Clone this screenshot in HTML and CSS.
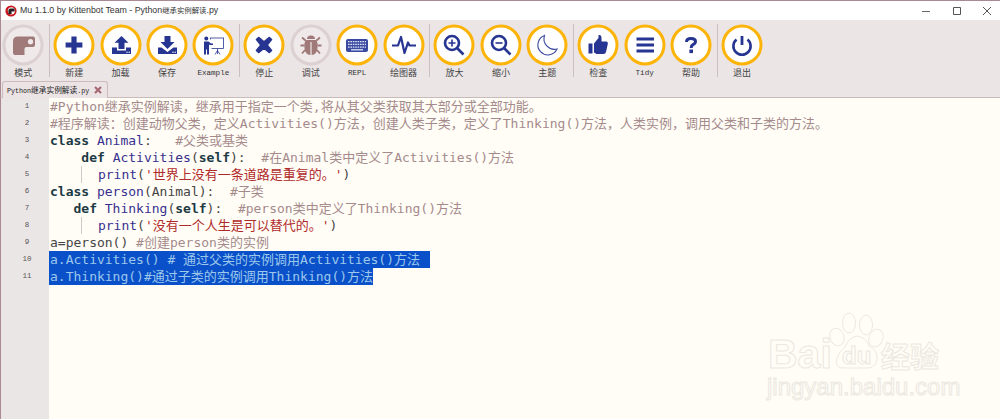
FILE: index.html
```html
<!DOCTYPE html>
<html lang="zh-CN">
<head>
<meta charset="utf-8">
<title>Mu 1.1.0 by Kittenbot Team - Python继承实例解读.py</title>
<link rel="stylesheet" href="styles.css">
</head>
<body>
<div class="window">
  <header class="titlebar">
    <svg class="app-icon" viewBox="0 0 12 12" width="12" height="12"><circle cx="6" cy="6" r="5.6" fill="#c8161d"/><circle cx="6.4" cy="5.8" r="3.6" fill="#fff"/><path d="M3.4 9V5.6Q3.4 3.6 5.4 3.6H9.6V6.6H6.6V9Z" fill="#2a2024"/></svg>
    <span class="app-title">Mu 1.1.0 by Kittenbot Team - Python<span class="title-cjk">继承实例解读</span>.py</span>
    <div class="win-controls">
      <svg viewBox="0 0 10 10" width="10" height="10"><path d="M0 5.5H8" stroke="#666" fill="none"/></svg>
      <svg viewBox="0 0 10 10" width="10" height="10"><path d="M1.5 1.5H8.5V8.5H1.5Z" stroke="#555" fill="none"/></svg>
      <svg viewBox="0 0 10 10" width="10" height="10"><path d="M1 1L9 9M9 1L1 9" stroke="#555" fill="none"/></svg>
    </div>
  </header>

  <nav class="toolbar">
    <div class="tool tool-first">
      <svg class="icon" viewBox="0 0 42 42"><circle class="ring-off" cx="21" cy="21" r="19"/><path class="mauve" d="M11 29V17.5Q11 12.5 16 12.5H31Q33 12.5 33 14.5V21Q33 23 31 23H24.5Q22.5 23 22.5 25V31H13Q11 31 11 29Z"/><circle cx="28.5" cy="17.7" r="2.6" fill="#efe9ea"/></svg>
      <span class="label">模式</span>
    </div>
    <div class="sep"></div>
    <div class="tool">
      <svg class="icon" viewBox="0 0 42 42"><circle class="ring" cx="21" cy="21" r="19"/><path class="navy" d="M18.4 12.6H23.6V18.4H29.4V23.6H23.6V29.4H18.4V23.6H12.6V18.4H18.4Z"/></svg>
      <span class="label">新建</span>
    </div>
    <div class="tool">
      <svg class="icon" viewBox="0 0 42 42"><circle class="ring" cx="21" cy="21" r="19"/><path class="navy" d="M21.5 12L28.5 18.8H24.5V25H18.5V18.8H14.5ZM12 23.5H17V26.5H26V23.5H31V30H12Z"/><circle cx="27" cy="28.2" r="0.7" fill="#fff"/><circle cx="29.2" cy="28.2" r="0.7" fill="#fff"/></svg>
      <span class="label">加载</span>
    </div>
    <div class="tool">
      <svg class="icon" viewBox="0 0 42 42"><circle class="ring" cx="21" cy="21" r="19"/><path class="navy" d="M18.5 12H24.5V18H28.5L21.5 25L14.5 18H18.5ZM12 23.5H15.5L21.5 28L27.5 23.5H31V30H12Z"/><circle cx="27" cy="28.2" r="0.7" fill="#fff"/><circle cx="29.2" cy="28.2" r="0.7" fill="#fff"/></svg>
      <span class="label">保存</span>
    </div>
    <div class="tool">
      <svg class="icon" viewBox="0 0 42 42"><circle class="ring" cx="21" cy="21" r="19"/><circle class="navy" cx="14.3" cy="14.5" r="2"/><path class="navy" d="M12 17.5H16.5L19 19.5H21V21H18L17 20.5V30.5H15V25.5H14V30.5H12Z"/><path d="M18 14H32M18.5 14V15.5M31.5 14V24.5H19.5M25.5 24.5V30M25.5 26.5L23 30.5M25.5 26.5L28 30.5" stroke="#263591" stroke-width="0.8" fill="none"/></svg>
      <span class="label mono">Example</span>
    </div>
    <div class="sep"></div>
    <div class="tool">
      <svg class="icon" viewBox="0 0 42 42"><circle class="ring" cx="21" cy="21" r="19"/><path class="navy" d="M15.6 13.4L21 17.8L26.4 13.4L28.6 15.6L24.2 21L28.6 26.4L26.4 28.6L21 24.2L15.6 28.6L13.4 26.4L17.8 21L13.4 15.6Z" stroke="#263591" stroke-width="1.4" stroke-linejoin="round"/></svg>
      <span class="label">停止</span>
    </div>
    <div class="tool">
      <svg class="icon" viewBox="0 0 42 42"><circle class="ring-off" cx="21" cy="21" r="19"/><path class="mauve" d="M17 15Q17 11.5 21 11.5Q25 11.5 25 15ZM15.5 16H26.5Q28 19 27.5 24Q27 30.5 21.6 31V18H20.4V31Q15 30.5 14.5 24Q14 19 15.5 16Z"/><path d="M15.5 16.5L12 13.5M26.5 16.5L30 13.5M14.5 21.5H10.5M27.5 21.5H31.5M15 26L12 29.5M27 26L30 29.5" stroke="#a07a78" stroke-width="1.8" fill="none"/></svg>
      <span class="label">调试</span>
    </div>
    <div class="tool">
      <svg class="icon" viewBox="0 0 42 42"><circle class="ring" cx="21" cy="21" r="19"/><rect x="10" y="15" width="22" height="13" rx="2" fill="#3a4aa0"/><path d="M12 17.7H30M12 20.4H30M12 23.1H30" stroke="#dfe3f5" stroke-width="1.3" stroke-dasharray="1.6 .8" fill="none"/><path d="M15 25.8H27" stroke="#dfe3f5" stroke-width="1.3"/></svg>
      <span class="label mono">REPL</span>
    </div>
    <div class="tool">
      <svg class="icon" viewBox="0 0 42 42"><circle class="ring" cx="21" cy="21" r="19"/><path d="M9 21.5H15L18 13L21.5 29L25 18.5L26.5 21.5H33" stroke="#263591" stroke-width="2.2" fill="none" stroke-linejoin="round"/></svg>
      <span class="label">绘图器</span>
    </div>
    <div class="sep"></div>
    <div class="tool">
      <svg class="icon" viewBox="0 0 42 42"><circle class="ring" cx="21" cy="21" r="19"/><circle cx="19" cy="19" r="7" fill="none" stroke="#263591" stroke-width="2.6"/><path d="M24 24L30.5 30.5" stroke="#263591" stroke-width="2.6"/><path d="M19 15.5V22.5M15.5 19H22.5" stroke="#263591" stroke-width="1.6"/></svg>
      <span class="label">放大</span>
    </div>
    <div class="tool">
      <svg class="icon" viewBox="0 0 42 42"><circle class="ring" cx="21" cy="21" r="19"/><circle cx="19" cy="19" r="7" fill="none" stroke="#263591" stroke-width="2.6"/><path d="M24 24L30.5 30.5" stroke="#263591" stroke-width="2.6"/><path d="M15.5 19H22.5" stroke="#263591" stroke-width="1.6"/></svg>
      <span class="label">缩小</span>
    </div>
    <div class="tool">
      <svg class="icon" viewBox="0 0 42 42"><circle class="ring" cx="21" cy="21" r="19"/><path d="M18.5 11.5A10 10 0 1 0 31 25A10.5 10.5 0 0 1 18.5 11.5Z" fill="none" stroke="#3a4aa0" stroke-width="1.1"/></svg>
      <span class="label">主题</span>
    </div>
    <div class="sep"></div>
    <div class="tool">
      <svg class="icon" viewBox="0 0 42 42"><circle class="ring" cx="21" cy="21" r="19"/><path class="navy" d="M11.5 19.5H15.5V29.5H11.5ZM17 19.5L21.5 14V11Q24.5 10.5 24.5 14V17.5H29.5Q31.3 17.5 30.8 20L29 28Q28.5 30 26.5 30H19.5L17 28.5Z"/></svg>
      <span class="label">检查</span>
    </div>
    <div class="tool">
      <svg class="icon" viewBox="0 0 42 42"><circle class="ring" cx="21" cy="21" r="19"/><path class="navy" d="M12.5 13.5H30V16.5H12.5ZM12.5 19.5H30V22.5H12.5ZM12.5 25.5H30V28.5H12.5Z"/></svg>
      <span class="label mono">Tidy</span>
    </div>
    <div class="tool">
      <svg class="icon" viewBox="0 0 42 42"><circle class="ring" cx="21" cy="21" r="19"/><path d="M16.5 18Q16.5 14.5 21 14.5Q25.5 14.5 25.5 17.6Q25.5 19.5 23 20.7Q21.2 21.6 21.2 24" fill="none" stroke="#263591" stroke-width="3"/><rect class="navy" x="19.4" y="25.5" width="3.6" height="3.6"/></svg>
      <span class="label">帮助</span>
    </div>
    <div class="sep"></div>
    <div class="tool">
      <svg class="icon" viewBox="0 0 42 42"><circle class="ring" cx="21" cy="21" r="19"/><path d="M21 12V21" stroke="#263591" stroke-width="2.8"/><path d="M15.5 15.5A8.6 8.6 0 1 0 26.5 15.5" fill="none" stroke="#263591" stroke-width="2.6"/></svg>
      <span class="label">退出</span>
    </div>
  </nav>

  <div class="tabbar">
    <div class="tab">
      <span class="tab-name">Python<span class="tab-cjk">继承实例解读</span>.py</span>
      <svg class="tab-close" viewBox="0 0 8 8" width="8" height="8"><path d="M1 1L7 7M7 1L1 7" stroke="#a5666f" stroke-width="2"/></svg>
    </div>
  </div>

  <main class="editor">
    <div class="gutter">
      <div class="num">1</div><div class="num">2</div><div class="num">3</div><div class="num">4</div><div class="num">5</div><div class="num">6</div><div class="num">7</div><div class="num">8</div><div class="num">9</div><div class="num">10</div><div class="num">11</div>
    </div>
    <div class="code">
      <div class="line cm">#Python<span class="c">继承实例解读，继承用于指定一个类</span>,<span class="c">将从其父类获取其大部分或全部功能。</span></div>
      <div class="line cm">#<span class="c">程序解读：创建动物父类，定义</span>Activities()<span class="c">方法，创建人类子类，定义了</span>Thinking()<span class="c">方法，人类实例，调用父类和子类的方法。</span></div>
      <div class="line"><b class="kw">class</b> <span class="nm">Animal</span>:   <span class="cm">#<span class="c">父类或基类</span></span></div>
      <div class="line">    <b class="kw">def</b> <span class="nm">Activities</span>(<b class="kw">self</b>):  <span class="cm">#<span class="c">在</span>Animal<span class="c">类中定义了</span>Activities()<span class="c">方法</span></span></div>
      <div class="line">    <span class="guide"></span>  <span class="nm">print</span>(<span class="st">'<span class="c">世界上没有一条道路是重复的。</span>'</span>)</div>
      <div class="line"><b class="kw">class</b> <span class="nm">person</span>(Animal):  <span class="cm">#<span class="c">子类</span></span></div>
      <div class="line">   <b class="kw">def</b> <span class="nm">Thinking</span>(<b class="kw">self</b>):  <span class="cm">#person<span class="c">类中定义了</span>Thinking()<span class="c">方法</span></span></div>
      <div class="line">    <span class="guide"></span>  <span class="nm">print</span>(<span class="st">'<span class="c">没有一个人生是可以替代的。</span>'</span>)</div>
      <div class="line">a=person() <span class="cm">#<span class="c">创建</span>person<span class="c">类的实例</span></span></div>
      <div class="line"><span class="sel sel-long">a.Activities() # <span class="c">通过父类的实例调用</span>Activities()<span class="c">方法</span></span></div>
      <div class="line"><span class="sel">a.Thinking()#<span class="c">通过子类的实例调用</span>Thinking()<span class="c">方法</span></span></div>
    </div>
    <svg class="watermark" viewBox="0 0 200 100" width="200" height="100">
      <g class="wm-shape">
        <ellipse cx="76" cy="27" rx="7" ry="9" transform="rotate(-20 76 27)"/>
        <ellipse cx="88" cy="13" rx="6.5" ry="10"/>
        <ellipse cx="105" cy="15" rx="6.5" ry="10"/>
        <ellipse cx="115" cy="28" rx="7" ry="9" transform="rotate(20 115 28)"/>
        <path d="M96 26Q106 28 108 36Q117 40 116 50Q114 59 104 58H84Q73 59 76 48Q78 42 84 37Q87 28 96 26Z"/>
      </g>
      <text class="wm-big" x="7" y="58">Bai</text>
      <text class="wm-du" x="81" y="54">du</text>
      <text class="wm-cjk" x="120" y="58">经验</text>
      <text class="wm-url" x="6" y="85">jingyan.baidu.com</text>
    </svg>
  </main>
</div>
</body>
</html>
```

FILE: styles.css
```css
* { box-sizing: border-box; }
html, body { margin: 0; padding: 0; }
body { width: 1000px; height: 419px; overflow: hidden; background: #fffdf6; }
.window { width: 1000px; height: 419px; display: flex; flex-direction: column; position: relative; overflow: hidden; }

.titlebar { height: 20px; flex: none; display: flex; align-items: center; background: #fff; border-top: 1px solid #a98a92; border-left: 1px solid #a98a92; padding-left: 4px; }
.app-icon { flex: none; }
.app-title { margin-left: 3px; font: 8.8px/1 "Liberation Sans", "Noto Sans CJK SC", sans-serif; color: #333; white-space: nowrap; }
.title-cjk { font: 7.4px/1 "Noto Sans CJK SC", sans-serif; }
.win-controls { margin-left: auto; display: flex; gap: 20px; padding-right: 8px; }

.toolbar { height: 60px; flex: none; display: flex; align-items: flex-start; padding-top: 4px; background: #ebe5e6; border-left: 1px solid #a98a92; }
.tool { width: 46.4px; flex: none; display: flex; flex-direction: column; align-items: center; }
.tool-first { margin-left: -1px; }
.icon { width: 42px; height: 42px; display: block; flex: none; }
.ring { fill: #fff; stroke: #fdb408; stroke-width: 3; }
.ring-off { fill: #efe9ea; stroke: #dcd0d1; stroke-width: 3; }
.navy { fill: #263591; }
.mauve { fill: #a07a78; }
.label { height: 14px; font: 9px/14px "Noto Sans CJK SC", sans-serif; color: #444; white-space: nowrap; }
.label.mono { font: 7.6px/14px "Liberation Mono", monospace; color: #333; }
.sep { width: 4.6px; height: 53px; flex: none; position: relative; padding-left: 2.5px; }
.sep::before { content: ""; display: block; width: 1px; height: 100%; background: #cdbfbf; }

.tabbar { height: 18px; flex: none; background: #ebe5e6; border-left: 1px solid #a98a92; border-bottom: 1px solid #c9bbbb; padding-left: 1px; padding-top: 1px; }
.tab { width: 106px; height: 17px; display: flex; align-items: center; justify-content: space-between; padding: 0 5px 0 4px; background: #ebe3e4; border: 1px solid #cdbabd; border-bottom: 0; border-radius: 3px 3px 0 0; }
.tab-name { font: 6.7px/1 "Liberation Mono", monospace; color: #222; white-space: nowrap; }
.tab-cjk { font: 7.7px/1 "Noto Sans CJK SC", sans-serif; }
.tab-close { flex: none; }

.editor { flex: 1; display: flex; position: relative; overflow: hidden; background: #fffdf6; }
.gutter { width: 49px; flex: none; background: #ebe6e6; border-left: 1px solid #a98a92; }
.num { height: 17px; padding-left: 4px; text-align: center; font: 7.5px/17px "Liberation Mono", monospace; color: #555; }
.code { flex: 1; padding-left: 1px; font: 13px/15px "DejaVu Sans Mono", monospace; color: #444; }
.line { height: 17px; white-space: pre; }
.c { font: 13px/15px "Noto Sans CJK SC", sans-serif; }
.cm { color: #a58a8c; }
.kw { color: #1c3a44; font-weight: 700; }
.nm { color: #37308f; }
.st { color: #b02a2a; }
.guide { display: inline-block; width: 0; height: 17px; border-left: 1px solid #cfcaca; vertical-align: top; }
.sel { display: inline-block; height: 17px; vertical-align: top; background: #0a50c8; color: #9cc8ec; margin-left: -1px; padding-left: 1px; }
.sel-long { padding-right: 10px; }

.watermark { position: absolute; left: 761px; top: 212px; }
.wm-shape { fill: #fffdf6; stroke: #ece9e2; stroke-width: 1; }
.watermark text { fill: #fffdf6; stroke: #ebe8e1; stroke-width: 1; }
.wm-big { font: 700 41px "Liberation Sans", sans-serif; }
.wm-du { font: 700 24px "Liberation Sans", sans-serif; }
.wm-cjk { font: 700 29px "Noto Sans CJK SC", sans-serif; }
.wm-url { font: 24px "Liberation Sans", sans-serif; }
```
